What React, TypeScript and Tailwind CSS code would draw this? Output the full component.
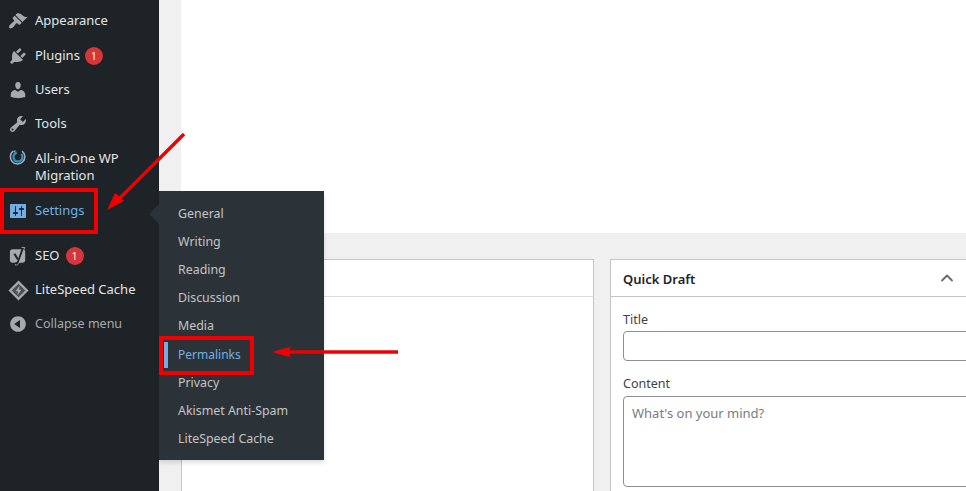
import { ReactNode } from 'react';
import { ChevronUp } from 'lucide-react';

const font = "font-['Noto_Sans','Open_Sans',sans-serif]";

const DashIcon = ({ d, className }: { d: string; className: string }) => (
    <svg viewBox="0 0 20 20" className={className} fill="currentColor">
        <path fillRule="evenodd" d={d} />
    </svg>
);

const icons = {
    appearance: 'M14.48 11.06L7.41 3.99l1.5-1.5c.5-.56 2.3-.47 3.51.32 1.21.8 1.43 1.28 2.91 2.1 1.18.64 2.45 1.26 4.45.85zm-.71.71L6.7 4.7 4.93 6.47c-.39.39-.39 1.02 0 1.41l1.06 1.06c.39.39.39 1.03 0 1.42-.6.6-1.43 1.11-2.21 1.69-.35.26-.7.53-1.01.84C1.43 14.23.4 16.08 1.4 17.07c.99 1 2.84-.03 4.18-1.36.31-.31.58-.66.85-1.02.57-.78 1.08-1.61 1.69-2.21.39-.39 1.02-.39 1.41 0l1.06 1.06c.39.39 1.02.39 1.41 0z',
    plugins: 'M13.11 4.36L9.87 7.6 8 5.73l3.24-3.24c.35-.34 1.05-.2 1.56.32.52.51.66 1.21.31 1.55zm-8 1.77l.91-1.12 9.01 9.01-1.19.84c-.71.71-2.63 1.16-3.82 1.16H6.14L4.9 17.26c-.59.59-1.54.59-2.12 0-.59-.58-.59-1.53 0-2.12l1.24-1.24v-3.88c0-1.13.4-3.19 1.09-3.89zm7.26 3.97l3.24-3.24c.34-.35 1.04-.21 1.55.31.52.51.66 1.21.31 1.55l-3.24 3.25z',
    users: 'M10 9.25c-2.27 0-2.73-3.44-2.73-3.44C7 4.02 7.82 2 9.97 2c2.16 0 2.98 2.02 2.71 3.81 0 0-.41 3.44-2.68 3.44zm0 2.57L12.72 10c2.39 0 4.52 2.33 4.52 4.53v2.49s-3.65 1.13-7.24 1.13c-3.65 0-7.24-1.13-7.24-1.13v-2.49c0-2.25 1.94-4.48 4.47-4.48z',
    tools: 'M16.68 9.77c-1.34 1.34-3.3 1.67-4.95.99l-5.41 6.52c-.99.99-2.59.99-3.58 0s-.99-2.59 0-3.57l6.52-5.42c-.68-1.65-.35-3.61.99-4.95 1.28-1.28 3.12-1.62 4.72-1.06l-2.89 2.89 2.82 2.82 2.86-2.87c.53 1.58.18 3.39-1.08 4.65zM3.81 16.21c.4.39 1.04.39 1.43 0 .4-.4.4-1.04 0-1.43-.39-.4-1.03-.4-1.43 0-.39.39-.39 1.03 0 1.43z',
    settings: 'M18 16V4c0-.55-.45-1-1-1H3c-.55 0-1 .45-1 1v12c0 .55.45 1 1 1h14c.55 0 1-.45 1-1zM8 11h1c.55 0 1 .45 1 1s-.45 1-1 1H8v1.5c0 .28-.22.5-.5.5s-.5-.22-.5-.5V13H6c-.55 0-1-.45-1-1s.45-1 1-1h1V5.5c0-.28.22-.5.5-.5s.5.22.5.5V11zm5-2h-1c-.55 0-1-.45-1-1s.45-1 1-1h1V5.5c0-.28.22-.5.5-.5s.5.22.5.5V7h1c.55 0 1 .45 1 1s-.45 1-1 1h-1v5.5c0 .28-.22.5-.5.5s-.5-.22-.5-.5V9z',
    collapse: 'M10 2.16c4.33 0 7.84 3.51 7.84 7.84s-3.51 7.84-7.84 7.84S2.16 14.33 2.16 10 5.71 2.16 10 2.16zm2 11.72V6.12L6.18 9.97z',
};

const MigrationIcon = () => (
    <svg viewBox="0 0 20 20" className="w-[18px] h-[18px]" fill="none">
        <path d="M14.5 3.5A8 8 0 1 1 5 3.2" stroke="#a7aaad" strokeWidth="1.8" />
        <path d="M5 3.2l2.6-.6-1 2.6z" fill="#a7aaad" />
        <path d="M13.6 6.6A5 5 0 1 1 8.6 5.2" stroke="#2f8fc4" strokeWidth="2.6" />
    </svg>
);

const YoastIcon = () => (
    <svg viewBox="0 0 20 22" className="w-[18px] h-[20px]" fill="none">
        <rect x="1" y="3.5" width="17" height="15" rx="3" fill="#a7aaad" />
        <path d="M6 8.5L10 15" stroke="#1d2327" strokeWidth="2.2" />
        <path d="M15.5 2L10.5 16.5C9.8 18.6 8.8 19.4 6.5 19.6" stroke="#1d2327" strokeWidth="2.2" />
        <path d="M14 1.5h3.5L11 19c-.7 1.6-2 2-4 2.2v-1" stroke="#a7aaad" strokeWidth="1" />
    </svg>
);

const LiteSpeedIcon = () => (
    <svg viewBox="0 0 20 20" className="w-[21px] h-[21px]">
        <path d="M10 .5L19.5 10 10 19.5.5 10z" fill="#a7aaad" />
        <path d="M10 3.5L16.5 10 10 16.5 3.5 10z" fill="#4a4f54" />
        <path d="M11 5.5L7.2 10.6h2.3L9 14.5l3.8-5.1h-2.3z" fill="#a7aaad" />
    </svg>
);

const Badge = () => (
    <span className="w-[18px] h-[18px] rounded-full bg-[#d63638] text-white text-[10px] flex items-center justify-center">1</span>
);

const MenuRow = ({ icon, children, height = 'h-[34px]' }: { icon: ReactNode; children: ReactNode; height?: string }) => (
    <div className={`flex items-center ${height}`}>
        <div className="w-[35px] flex justify-center items-center shrink-0 pl-px text-[#a7aaad]">{icon}</div>
        {children}
    </div>
);

const flyoutItems = ['General', 'Writing', 'Reading', 'Discussion', 'Media', 'Permalinks', 'Privacy', 'Akismet Anti-Spam', 'LiteSpeed Cache'];

const Flyout = () => (
    <div className="absolute left-[159px] top-[191px] w-[165px] h-[269px] bg-[#2c3338] pt-[9px] shadow-[0_3px_4px_rgba(0,0,0,0.12)]">
        <div className="absolute -left-[7px] top-[16px] w-[14px] h-[14px] rotate-45 bg-[#2c3338]" />
        {flyoutItems.map((item) => (
            <div key={item} className={`relative h-[28px] flex items-center pl-[19px] ${item === 'Permalinks' ? 'mt-px text-[12px] text-[#72aee6]' : 'text-[12.4px] text-[#c3c4c7]'}`}>
                {item === 'Permalinks' && <span className="absolute left-[5px] top-[1px] w-1 h-[26px] bg-[#72aee6]" />}
                {item}
            </div>
        ))}
    </div>
);

const App = () => {
    return (
        <div className={`relative w-[966px] h-[491px] overflow-hidden flex bg-[#f0f0f1] ${font}`}>
            {/* Admin menu */}
            <aside className="w-[159px] shrink-0 bg-[#1d2327] pt-[4px] text-[13px] text-[#e4e5e7]">
                <MenuRow icon={<DashIcon d={icons.appearance} className="w-[20px] h-[20px]" />}>Appearance</MenuRow>
                <div className="h-px" />
                <MenuRow icon={<DashIcon d={icons.plugins} className="w-[20px] h-[20px]" />}>
                    Plugins<span className="ml-[5px]"><Badge /></span>
                </MenuRow>
                <MenuRow icon={<DashIcon d={icons.users} className="w-[20px] h-[20px]" />}>Users</MenuRow>
                <MenuRow icon={<DashIcon d={icons.tools} className="w-[20px] h-[20px]" />}>Tools</MenuRow>
                <div className="flex items-start h-[53px]">
                    <div className="w-[35px] flex justify-center shrink-0 pl-px pt-[7px]"><MigrationIcon /></div>
                    <span className="leading-[17px] pt-[9px]">All-in-One WP<br />Migration</span>
                </div>
                <MenuRow icon={<DashIcon d={icons.settings} className="w-[20px] h-[20px] text-[#72aee6]" />}>
                    <span className="text-[#72aee6]">Settings</span>
                </MenuRow>
                <div className="h-[11px]" />
                <MenuRow icon={<YoastIcon />}>
                    SEO<span className="ml-[6px]"><Badge /></span>
                </MenuRow>
                <MenuRow icon={<LiteSpeedIcon />}>LiteSpeed Cache</MenuRow>
                <MenuRow icon={<DashIcon d={icons.collapse} className="w-[20px] h-[20px]" />}>
                    <span className="text-[#a7aaad] text-[12.5px]">Collapse menu</span>
                </MenuRow>
            </aside>

            {/* Dashboard content */}
            <main className="flex-1 min-w-0 pl-[22px]">
                <div className="h-[233px] bg-white" />
                <div className="mt-[26px] flex gap-[16px]">
                    <section className="w-[413px] shrink-0 h-[300px] bg-white border border-[#c3c4c7]">
                        <div className="h-[37px] border-b border-[#dcdcde]" />
                    </section>
                    <section className="w-[420px] shrink-0 h-[300px] bg-white border border-[#c3c4c7]">
                        <div className="h-[37px] border-b border-[#c3c4c7] flex items-center justify-between pl-3 pr-[10px] pt-[3px]">
                            <h2 className="text-[13px] font-semibold text-[#1d2327]">Quick Draft</h2>
                        </div>
                        <div className="pl-3 text-[#3c434a] text-[12.5px]">
                            <div className="h-[34px] flex items-end pb-px">Title</div>
                            <div className="w-[420px] h-[30px] rounded border border-[#8c8f94] bg-white" />
                            <div className="mt-[12px] h-[23px] flex items-center">Content</div>
                            <div className="w-[420px] h-[91px] rounded border border-[#8c8f94] bg-white px-2 py-[6px] text-[#787c82] text-[13px] leading-[20px]">What's on your mind?</div>
                        </div>
                    </section>
                </div>
            </main>

            <ChevronUp className="absolute left-[937px] top-[268px] w-[20px] h-[20px] text-[#646970]" strokeWidth={2.2} />

            <Flyout />

            {/* Red annotations */}
            <div className="absolute left-0 top-[188px] w-[98px] h-[46px] border-4 border-[#f00000]" />
            <div className="absolute left-[159px] top-[336px] w-[95px] h-[39px] border-4 border-[#f00000]" />
            <svg className="absolute inset-0 w-[966px] h-[491px] pointer-events-none" viewBox="0 0 966 491">
                <path d="M184 134L120 198" stroke="#ee0000" strokeWidth="3.4" />
                <path d="M107 210L115 193L119 196L124 201z" fill="#ee0000" />
                <path d="M398 352L286 352" stroke="#ee0000" strokeWidth="3.6" />
                <path d="M272 352L291 346.5L288 352L291 357.5z" fill="#ee0000" />
            </svg>
        </div>
    );
};

export default App;
